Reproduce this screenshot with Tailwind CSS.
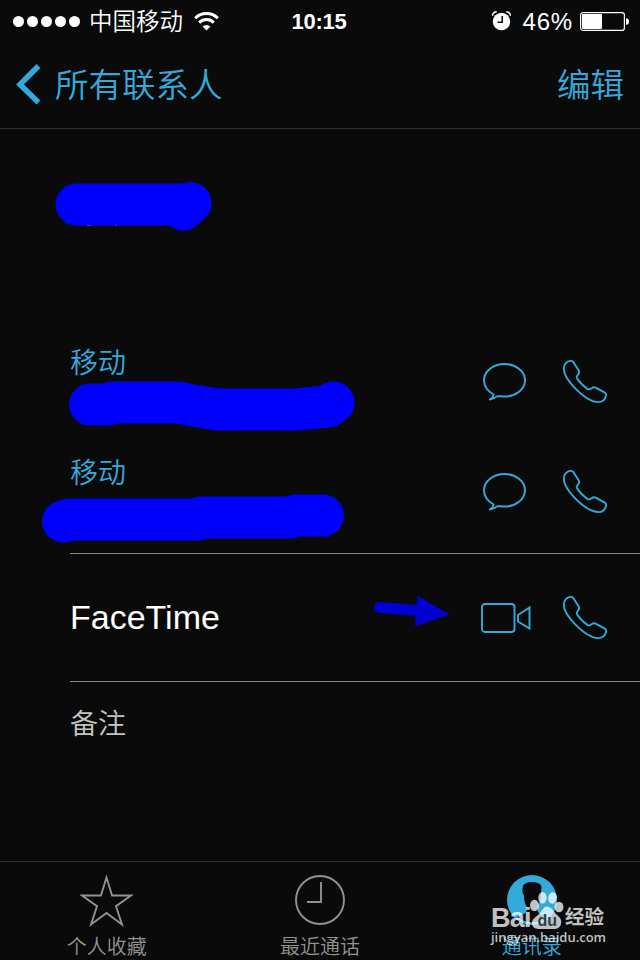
<!DOCTYPE html>
<html lang="zh-CN">
<head>
    <meta charset="UTF-8">
    <meta name="viewport" content="width=device-width, initial-scale=1.0">
    <title>通讯录</title>
    <script src="https://cdn.jsdelivr.net/npm/@tailwindcss/browser@4"></script>
</head>
<body class="bg-[#0a0a0a]">
    <!-- 公用图标 -->
    <svg class="hidden">
        <symbol id="bubble" viewBox="0 0 46 40">
            <path d="M11.500 32.500C5.700 29.200 2 24 2 18.300 2 9.300 11.300 2 22.500 2S43 9.300 43 18.300s-9 16.200-20.500 16.200c-2.500 0-5-.4-7.200-.4-2 1.700-4.400 3-7.400 3.400 1.900-1.200 3.900-3 3.600-5z" fill="none" stroke="currentColor" stroke-width="1.900" stroke-linejoin="round"/>
        </symbol>
        <symbol id="phone" viewBox="0 0 46 46">
            <path d="M1.800 8.500C1.800 4.100 5 1.100 8.900.9c1.100-.1 1.800.3 2.500 1.300l5.200 8.100c.8 1.300.7 2.200 0 3.400-1.300 2-2.600 2.700-1.600 4.500 2.700 4.400 6.200 7.700 10.400 10.700 1.600 1.100 2.700.5 4.200-.6 1.400-1.100 2.600-1.300 4-.6l8.900 4.700c1.400.8 1.900 1.600 1.600 3-.8 4-3.200 6.500-7.200 6.700-6.700.2-16.400-6.400-24.200-14.300C5.300 20.200 1.800 13.500 1.800 8.500z" fill="none" stroke="currentColor" stroke-width="1.900" stroke-linejoin="round"/>
        </symbol>
    </svg>

    <div class="relative flex flex-col w-[640px] h-[960px] overflow-hidden bg-[#0a0a0a] text-white font-[350] font-['Liberation_Sans','Noto_Sans_CJK_SC',sans-serif]">
        <!-- 状态栏 -->
        <header class="grid grid-cols-3 items-center h-10 pl-[13px] pr-[11px] pt-0.5 shrink-0">
            <div class="flex items-center">
                <div class="flex gap-[3px] -mt-0.5">
                    <i class="size-[11px] rounded-full bg-white"></i>
                    <i class="size-[11px] rounded-full bg-white"></i>
                    <i class="size-[11px] rounded-full bg-white"></i>
                    <i class="size-[11px] rounded-full bg-white"></i>
                    <i class="size-[11px] rounded-full bg-white"></i>
                </div>
                <span class="ml-[9px] text-[23.500px] leading-10 whitespace-nowrap">中国移动</span>
                <svg class="ml-[11px] w-[25px] h-[19px] -mt-0.5 shrink-0" viewBox="0 0 25 19" fill="none" stroke="#fff" stroke-width="3">
                    <path d="M1.200 6.200a16 16 0 0 1 22.600 0"/>
                    <path d="M5.200 10.600a10.400 10.400 0 0 1 14.600 0"/>
                    <path d="M12.500 18.500L8.600 14.600a5.600 5.600 0 0 1 7.800 0z" fill="#fff" stroke="none"/>
                </svg>
            </div>
            <div class="text-center text-[22px] font-bold leading-10 pr-1 tracking-[-0.3px]">10:15</div>
            <div class="flex items-center justify-end">
                <svg class="w-5 h-5 mr-3 -mt-0.5" viewBox="0 0 20 20">
                    <circle cx="10.500" cy="10.500" r="8.700" fill="#fff"/>
                    <path d="M1.500 4.700C1.700 2.500 3.500.9 5.800.8M19.500 4.700C19.300 2.500 17.500.9 15.200.8" fill="none" stroke="#fff" stroke-width="1.500"/>
                    <path d="M11.200 5v6.200H6.500" fill="none" stroke="#0a0a0a" stroke-width="1.500"/>
                </svg>
                <span class="text-[24px] leading-10 tracking-[0.8px]">46%</span>
                <svg class="ml-[7px] w-[49px] h-[19px] -mt-0.5" viewBox="0 0 49 19">
                    <rect x=".6" y=".6" width="43.800" height="17.800" rx="2.500" fill="none" stroke="#fff" stroke-width="1.200"/>
                    <rect x="2" y="2" width="20" height="15" rx="1" fill="#fff"/>
                    <path d="M46 6.200c2 0 3 1.200 3 3.300s-1 3.300-3 3.300z" fill="#fff"/>
                </svg>
            </div>
        </header>

        <!-- 导航栏 -->
        <nav class="flex items-center justify-between h-[89px] shrink-0 pl-4 pr-4 border-b border-[#2e2e30] text-[#34aadc] text-[33.500px]">
            <a class="flex items-center">
                <svg class="w-[25px] h-10" viewBox="0 0 25 40"><path d="M22.500 2L4 20.500 22.500 38.500" fill="none" stroke="currentColor" stroke-width="5.500"/></svg>
                <span class="ml-[14px] pt-1">所有联系人</span>
            </a>
            <a class="pt-1">编辑</a>
        </nav>

        <!-- 联系人信息 -->
        <main class="flex-1 pt-[197px] pl-[70px] text-[28px]">
            <section class="h-[228px] border-b border-[#85858a] text-[#34aadc]">
                <div class="flex justify-between h-[110px] pr-8">
                    <span class="leading-[75px]">移动</span>
                    <div class="flex pt-[34px]">
                        <svg class="w-[46px] h-10 mt-0.5 mr-[34px]"><use href="#bubble"/></svg>
                        <svg class="w-[46px] h-[46px]"><use href="#phone"/></svg>
                    </div>
                </div>
                <div class="flex justify-between h-[110px] pr-8">
                    <span class="leading-[75px]">移动</span>
                    <div class="flex pt-[34px]">
                        <svg class="w-[46px] h-10 mt-0.5 mr-[34px]"><use href="#bubble"/></svg>
                        <svg class="w-[46px] h-[46px]"><use href="#phone"/></svg>
                    </div>
                </div>
            </section>
            <section class="flex items-center justify-between h-32 pr-8 border-b border-[#85858a]">
                <span class="text-[34px]">FaceTime</span>
                <div class="flex items-center text-[#34aadc]">
                    <svg class="w-[50px] h-[30px] mr-[31px]" viewBox="0 0 50 30" fill="none" stroke="currentColor" stroke-width="1.900">
                        <rect x="1" y="1" width="32.500" height="28" rx="3"/>
                        <path d="M37 12v6.500L48.500 25.500v-21z"/>
                    </svg>
                    <svg class="w-[46px] h-[46px] mt-0.5"><use href="#phone"/></svg>
                </div>
            </section>
            <section class="text-[#c4c4c4] leading-[85px]">备注</section>
        </main>

        <!-- 底部标签栏 -->
        <footer class="grid grid-cols-3 h-[99px] shrink-0 border-t border-[#2e2e30] text-[#929292] text-[20px]">
            <div class="flex flex-col items-center pt-[13px]">
                <svg class="w-[54px] h-[52px]" viewBox="0 0 54 52"><path d="M26.500 2.500l5.600 18H51L36 31.200 42 49.500 26.500 38 11 49.500 17 31.200 2 20.500H20.900z" fill="none" stroke="currentColor" stroke-width="1.900"/></svg>
                <span class="leading-[40px]">个人收藏</span>
            </div>
            <div class="flex flex-col items-center pt-[13px]">
                <svg class="w-[52px] h-[52px]" viewBox="0 0 52 52" fill="none" stroke="currentColor" stroke-width="1.900"><circle cx="26" cy="25" r="24"/><path d="M27 7v20H13"/></svg>
                <span class="leading-[40px]">最近通话</span>
            </div>
            <div class="flex flex-col items-center pt-[13px] pr-[3px] text-[#34aadc]">
                <svg class="w-[52px] h-[52px]" viewBox="0 0 52 52">
                    <circle cx="26" cy="25" r="25" fill="currentColor"/>
                    <path d="M17 11C18 8.500 22 7 26 7c5 0 8.500 1.500 9.500 4.500l-.5 9c0 5-2 8-3.500 11v5c2 3 6 4 9 5.500-8 7-21 7-29 0 3-1.500 7-2.500 9-5.500v-5c-2-3-2.500-7-2.500-11-1.500-2-2-5-1-9.500z" fill="#0a0a0a"/>
                </svg>
                <span class="leading-[40px]">通讯录</span>
            </div>
        </footer>

        <!-- 涂抹遮挡和箭头 -->
        <svg class="absolute inset-0 w-[640px] h-[960px]" viewBox="0 0 640 960">
            <g fill="none" stroke="#00f" stroke-width="42" stroke-linecap="round" stroke-linejoin="round">
                <path d="M76.500 204.500H183L190.500 203 183 209.500"/>
                <path d="M90 404.500H108L112 402.500H180L190 405 218 409.500H296L310 408 328 406.500 333.500 402.500"/>
                <path d="M63 521.500L70 519.500H198L201 517.500H290L295 515.500H323"/>
            </g>
            <path d="M87 225.500h4M115 225.500h2" stroke="#3535c8"/>
            <path d="M379.500 607.500L418 610.500" stroke="#0000d5" stroke-width="11" stroke-linecap="round"/>
            <path d="M417.500 595.800L449.500 614.500 415 626.300z" fill="#0000d5"/>
        </svg>

        <!-- 水印 -->
        <div class="absolute left-[491px] top-[890px] w-[116px] h-[58px] text-white/75">
            <div class="flex items-center h-[56px] leading-none">
                <span class="w-[38px] text-[27px] font-bold tracking-[-0.8px]">Bai</span>
                <svg class="w-[36px] h-[40px] -mt-[12px]" viewBox="0 0 36 40" fill="currentColor">
                    <ellipse cx="5.500" cy="13.500" rx="4.500" ry="5.700"/>
                    <ellipse cx="13.500" cy="5.800" rx="4.200" ry="5.800"/>
                    <ellipse cx="23.500" cy="6" rx="4.300" ry="5.700" transform="rotate(10 23.500 6)"/>
                    <ellipse cx="30" cy="15" rx="4.500" ry="5.300"/>
                    <path d="M18 14.500c4 0 6 4 9 7.500 4 4 6 5 5 10-1 4-4 5-7 5H11c-4 0-8-1-8-6 0-5 5-6 8-10 2-3 4-6.500 7-6.500z"/>
                    <text x="8.500" y="34" class="text-[16px] font-bold fill-[#28404b]">du</text>
                </svg>
                <span class="text-[19.500px] font-bold whitespace-nowrap">经验</span>
            </div>
            <div class="-mt-[18px] text-[13px] font-semibold leading-[18px] font-['Open_Sans','Noto_Sans',sans-serif]">jingyan.baidu.com</div>
        </div>
    </div>
</body>
</html>
